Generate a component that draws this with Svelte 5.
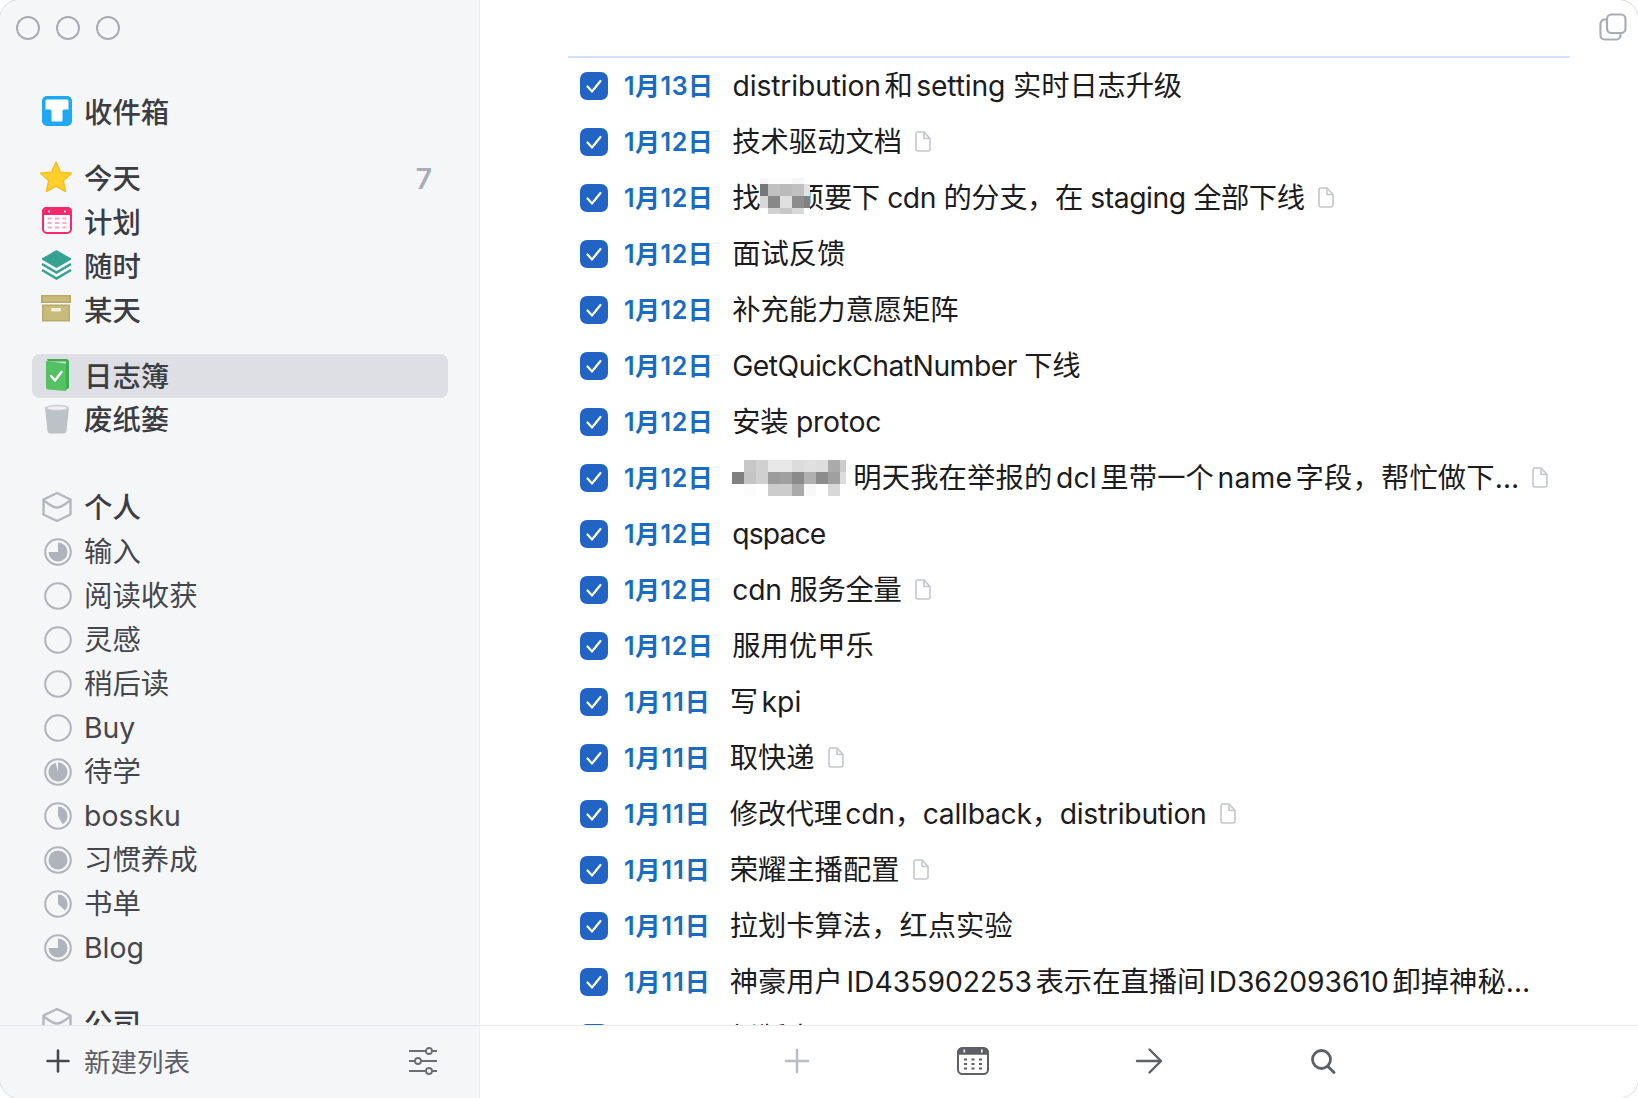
<script>
  const ring = '#afb3bb';

  const smart = [
    { name: '今天', icon: 'star', count: 7 },
    { name: '计划', icon: 'plan' },
    { name: '随时', icon: 'layers' },
    { name: '某天', icon: 'box' }
  ];

  const lists = [
    { name: '输入', pct: 75 },
    { name: '阅读收获', pct: 0 },
    { name: '灵感', pct: 0 },
    { name: '稍后读', pct: 0 },
    { name: 'Buy', pct: 0 },
    { name: '待学', pct: 96 },
    { name: 'bossku', pct: 42 },
    { name: '习惯养成', pct: 100 },
    { name: '书单', pct: 37 },
    { name: 'Blog', pct: 75 }
  ];

  // track: letter-spacing per row, the Latin runs are wider here than in the original font
  const entries = [
    { date: '1月13日', text: 'distribution和setting 实时日志升级', track: -0.15 },
    { date: '1月12日', text: '技术驱动文档', note: true },
    { date: '1月12日', text: '要下 cdn 的分支，在 staging 全部下线', note: true, blur: 'inline', track: -0.45 },
    { date: '1月12日', text: '面试反馈' },
    { date: '1月12日', text: '补充能力意愿矩阵' },
    { date: '1月12日', text: 'GetQuickChatNumber 下线', track: -0.5 },
    { date: '1月12日', text: '安装 protoc', track: -0.25 },
    { date: '1月12日', text: '明天我在举报的dcl里带一个name字段，帮忙做下…', note: true, blur: 'lead', track: 0.15 },
    { date: '1月12日', text: 'qspace', track: -0.9 },
    { date: '1月12日', text: 'cdn 服务全量', note: true, track: -0.25 },
    { date: '1月12日', text: '服用优甲乐' },
    { date: '1月11日', text: '写kpi' },
    { date: '1月11日', text: '取快递', note: true },
    { date: '1月11日', text: '修改代理cdn，callback，distribution', note: true, track: -0.28 },
    { date: '1月11日', text: '荣耀主播配置', note: true },
    { date: '1月11日', text: '拉划卡算法，红点实验' },
    { date: '1月11日', text: '神豪用户ID435902253表示在直播间ID362093610卸掉神秘…' },
    { date: '1月11日', text: '新版本', note: true }
  ];

  // redacted names in the screenshot, cell by cell
  const inlineMosaic = {
    cols: '8px 12px 12px 12px 6px',
    rows: '6px 12px 12px 6px',
    top: -4,
    cells: [
      '#f6f6f6', '#fdfdfd', '#fdfdfd', '#f7f7f7', '#fff',
      '#777', '#c0c0c0', '#bbb', '#c0c0c0', '#e2e2e2',
      '#d8d8d8', '#888', '#e0e0e0', '#8c8c8c', '#808080',
      '#fff', '#d2d2d2', '#c8c8c8', '#d8d8d8', '#fff'
    ]
  };
  const leadMosaic = {
    cols: 'repeat(9, 12px) 6px',
    rows: 'repeat(3, 12px)',
    top: -2,
    cells: [
      '#fff', '#c8c8c8', '#d0d0d0', '#e8e8e8', '#e8e8e8', '#dcdcdc', '#e0e0e0', '#dedede', '#aaa', '#ccc',
      '#808080', '#c4c4c4', '#d0d0d0', '#9c9c9c', '#a0a0a0', '#8a8a8a', '#b0b0b0', '#8c8c8c', '#a0a0a0', '#dcdcdc',
      '#fff', '#fcfcfc', '#fff', '#ccc', '#ccc', '#aaa', '#f8f8f8', '#fff', '#d8d8d8', '#fff'
    ]
  };

  function wedge(pct) {
    const r = 9.5;
    const a = (pct / 100) * Math.PI * 2;
    const x = 14 + r * Math.sin(a);
    const y = 14 - r * Math.cos(a);
    return `M14 14V${14 - r}A${r} ${r} 0 ${pct > 50 ? 1 : 0} 1 ${x.toFixed(2)} ${y.toFixed(2)}Z`;
  }
</script>

{#snippet mosaic(m)}
  <span class="mosaic" style="grid-template-columns:{m.cols};grid-template-rows:{m.rows};top:{m.top}px">
    {#each m.cells as c}
      <i style="background:{c}"></i>
    {/each}
  </span>
{/snippet}

{#snippet areaIcon()}
  <svg class="icon" width="32" height="32" viewBox="0 0 32 32" fill="none" stroke="#b3b7bf" stroke-width="2.4" stroke-linejoin="round">
    <path d="M16 2 29.500 8.500v15L16 30 2.500 23.500v-15Z" />
    <path d="M2.500 9.500C7 12 11 16.500 16 16.500s9-4.500 13.500-7" />
  </svg>
{/snippet}

<div class="window">
  <aside class="sidebar">
    <div class="lights">
      <span></span><span></span><span></span>
    </div>

    <nav class="nav">
      <div class="row strong">
        <svg class="icon" width="32" height="32" viewBox="0 0 32 32">
          <rect x="1" y="1" width="30" height="30" rx="5" fill="#1fa8f4" />
          <path fill="#fff" d="M6 4.500H26a1.500 1.500 0 0 1 1.500 1.500V14.500H23a1.500 1.500 0 0 0-1.500 1.500V25.500a1 1 0 0 1-1 1H11.500a1 1 0 0 1-1-1V16A1.500 1.500 0 0 0 9 14.500H4.500V6A1.500 1.500 0 0 1 6 4.500Z" />
        </svg>
        <span>收件箱</span>
      </div>

      <div class="group">
        {#each smart as item}
          <div class="row strong">
            {#if item.icon === 'star'}
              <svg class="icon star" width="34" height="34" viewBox="0 0 34 34">
                <path d="M17 2 21.500 12 32.500 13.200 24.300 20.600 26.600 31.500 17 26 7.400 31.500 9.700 20.600 1.500 13.200 12.500 12Z" fill="#ffd02b" stroke="#f7bf24" stroke-width="1.500" stroke-linejoin="round" />
              </svg>
            {:else if item.icon === 'plan'}
              <svg class="icon" width="32" height="32" viewBox="0 0 32 32">
                <rect x="2" y="3" width="28" height="25" rx="4" fill="#fff" stroke="#f5296b" stroke-width="2" />
                <path d="M2 9V6.500A3.500 3.500 0 0 1 5.500 3h21A3.500 3.500 0 0 1 30 6.500V9Z" fill="#f5296b" stroke="#f5296b" stroke-width="2" />
                <circle cx="8" cy="6.500" r="1" fill="#fff" />
                <circle cx="24" cy="6.500" r="1" fill="#fff" />
                <path d="M6.500 13.500h4M14 13.500h4M21.500 13.500h4M6.500 18h4M14 18h4M21.500 18h4M6.500 22.500h4M14 22.500h4M21.500 22.500h4" stroke="#fca7c4" stroke-width="2.200" />
              </svg>
            {:else if item.icon === 'layers'}
              <svg class="icon" width="32" height="32" viewBox="0 0 32 32">
                <path d="M15.500 2 29.500 10 15.500 18 1.500 10Z" fill="#36a291" stroke="#36a291" stroke-linejoin="round" stroke-width="1.500" />
                <path d="M1 15 15.500 23.500 30 15M1 21 15.500 29.500 30 21" fill="none" stroke="#36a291" stroke-width="2.600" />
              </svg>
            {:else}
              <svg class="icon" width="32" height="32" viewBox="0 0 32 32">
                <rect x="0" y="2" width="30" height="8" fill="#b8a96c" />
                <rect x="2" y="3.500" width="26" height="5" fill="#c9bb7b" />
                <rect x="1" y="11.500" width="28" height="17" fill="#b8a96c" />
                <rect x="2.500" y="13" width="25" height="14" fill="#c9bb7b" />
                <rect x="10" y="15" width="10" height="3.500" rx="1" fill="#f3efdc" />
              </svg>
            {/if}
            <span>{item.name}</span>
            {#if item.count}<b class="count">{item.count}</b>{/if}
          </div>
        {/each}
      </div>

      <div class="group">
        <div class="row strong selected">
          <svg class="icon book" width="32" height="34" viewBox="0 0 32 34">
            <path d="M5 1h19a3 3 0 0 1 3 3v26l-3 2V3.500H6Z" fill="#3fae50" />
            <path d="M4 3 24 5.500V33L6 31.500A2 2 0 0 1 4 29.500Z" fill="#54c263" />
            <path d="M9 18 13 22.500 19.500 14" fill="none" stroke="#fff" stroke-width="2.400" stroke-linecap="round" stroke-linejoin="round" />
          </svg>
          <span>日志簿</span>
        </div>
        <div class="row strong flush">
          <svg class="icon" width="32" height="32" viewBox="0 0 32 32">
            <path d="M4 4.500h24L25.500 28a3 3 0 0 1-3 2.500h-13a3 3 0 0 1-3-2.500Z" fill="#bcc2c8" />
            <ellipse cx="16" cy="4.800" rx="12" ry="3" fill="#c9ced3" />
            <ellipse cx="16" cy="5" rx="9.500" ry="1.700" fill="#eef0f2" />
          </svg>
          <span>废纸篓</span>
        </div>
      </div>

      <div class="group area">
        <div class="row strong flush">
          {@render areaIcon()}
          <span>个人</span>
        </div>
        {#each lists as list}
          <div class="row flush">
            <svg class="icon pie" width="28" height="28" viewBox="0 0 28 28">
              <circle cx="14" cy="14" r="12.800" fill="none" stroke={ring} stroke-width="2" />
              {#if list.pct >= 100}
                <circle cx="14" cy="14" r="9.500" fill={ring} />
              {:else if list.pct > 0}
                <path d={wedge(list.pct)} fill={ring} />
              {/if}
            </svg>
            <span>{list.name}</span>
          </div>
        {/each}
      </div>

      <div class="group second-area">
        <div class="row strong flush">
          {@render areaIcon()}
          <span>公司</span>
        </div>
      </div>
    </nav>

    <footer class="side-footer">
      <svg width="26" height="26" viewBox="0 0 26 26" stroke="#45484e" stroke-width="2.600" stroke-linecap="round">
        <path d="M13 2.500v21M2.500 13h21" />
      </svg>
      <span class="new-list">新建列表</span>
      <svg class="sliders" width="30" height="30" viewBox="0 0 30 30" fill="none" stroke="#6a6d73" stroke-width="1.800">
        <path d="M1 5h17M24 5h5M1 15h6M13 15h16M1 25h17M24 25h5" />
        <circle cx="21" cy="5" r="3" />
        <circle cx="10" cy="15" r="3" />
        <circle cx="21" cy="25" r="3" />
      </svg>
    </footer>
  </aside>

  <main class="content">
    <div class="topbar">
      <svg width="28" height="28" viewBox="0 0 28 28" fill="none" stroke="#a9adb3" stroke-width="2.200">
        <rect x="8" y="1.500" width="18.500" height="18.500" rx="4.500" />
        <path d="M8 6.500H5.500a4 4 0 0 0-4 4v12a4 4 0 0 0 4 4h12a4 4 0 0 0 4-4V20" />
      </svg>
    </div>

    <div class="list">
      {#each entries as entry}
        <div class="entry">
          <svg class="check" width="28" height="28" viewBox="0 0 28 28">
            <rect width="28" height="28" rx="7" fill="#2264c4" />
            <path d="M7.500 14.500 12 19.500 20.500 9" fill="none" stroke="#fff" stroke-width="2.200" stroke-linecap="round" stroke-linejoin="round" />
          </svg>
          <span class="date" class:ones={entry.date === '1月11日'}>{entry.date}</span>
          <span class="title" style="letter-spacing:{entry.track ?? 0}px">
            {#if entry.blur === 'inline'}
              找{@render mosaic(inlineMosaic)}<span class="tucked">须</span>{entry.text}
            {:else if entry.blur === 'lead'}
              {@render mosaic(leadMosaic)}<span class="after-lead">{entry.text}</span>
            {:else}
              {entry.text}
            {/if}
          </span>
          {#if entry.note}
            <svg class="note" width="16" height="21" viewBox="0 0 16 21" fill="none" stroke="#c3c6cb" stroke-width="1.600" stroke-linejoin="round">
              <path d="M3 1h6l6 6.500V18a2 2 0 0 1-2 2H3a2 2 0 0 1-2-2V3a2 2 0 0 1 2-2Z" />
              <path d="M9 1v6.500h6" />
            </svg>
          {/if}
        </div>
      {/each}
    </div>

    <footer class="toolbar">
      <svg width="26" height="26" viewBox="0 0 26 26" stroke="#b9bcc1" stroke-width="2.400" stroke-linecap="round">
        <path d="M13 2v22M2 13h22" />
      </svg>
      <svg width="32" height="28" viewBox="0 0 32 28">
        <rect x="1" y="1" width="30" height="26" rx="4.500" fill="#fff" stroke="#5d6066" stroke-width="2" />
        <path d="M1 7V5.500A4.500 4.500 0 0 1 5.500 1h21A4.500 4.500 0 0 1 31 5.500V7Z" fill="#5d6066" stroke="#5d6066" stroke-width="1.500" />
        <rect x="6.500" y="2.500" width="1.600" height="3" fill="#fff" />
        <rect x="24" y="2.500" width="1.600" height="3" fill="#fff" />
        <path d="M7 12.500h3M14.500 12.500h3M22 12.500h3M7 17h3M14.500 17h3M22 17h3M7 21.500h3M14.500 21.500h3M22 21.500h3" stroke="#5d6066" stroke-width="2.200" />
      </svg>
      <svg width="28" height="28" viewBox="0 0 28 28" fill="none" stroke="#5d6066" stroke-width="2.400" stroke-linecap="round" stroke-linejoin="round">
        <path d="M2 14h23M14.500 2.500 26 14 14.500 25.500" />
      </svg>
      <svg class="search" width="26" height="26" viewBox="0 0 26 26" fill="none" stroke="#5d6066" stroke-width="2.800" stroke-linecap="round">
        <circle cx="11.500" cy="11.500" r="9" />
        <path d="M18 18.500 24 24.500" />
      </svg>
    </footer>
  </main>
</div>

<style>
  :global(body) {
    margin: 0;
    background: #fff;
  }

  .window {
    display: flex;
    height: 1098px;
    overflow: hidden;
    border-radius: 20px;
    box-shadow: 0 0 0 1px #d8d9db;
    font-family: Inter, "Noto Sans CJK SC", sans-serif;
    text-autospace: normal;
  }

  .sidebar {
    display: flex;
    flex-direction: column;
    flex: none;
    width: 479px;
    background: #f5f6f8;
    border-right: 1px solid #eceef0;
  }

  .lights {
    display: flex;
    flex: none;
    gap: 16px;
    padding: 16px;
  }

  .lights span {
    width: 24px;
    height: 24px;
    box-sizing: border-box;
    border: 2px solid #a8acb3;
    border-radius: 50%;
  }

  .nav {
    flex: 1;
    min-height: 0;
    overflow: hidden;
    padding: 34px 31px 0 32px;
  }

  .group {
    margin-top: 22px;
  }

  .area {
    margin-top: 44px;
  }

  .second-area {
    margin-top: 32px;
  }

  .row {
    position: relative;
    display: flex;
    align-items: center;
    box-sizing: border-box;
    height: 44px;
    padding: 2px 0 0 52px;
    border-radius: 8px;
    font-size: 28.4px;
    line-height: 34px;
    color: #45474d;
  }

  .row.flush {
    padding-top: 0;
  }

  .row.strong {
    font-weight: 500;
    color: #3b3d43;
  }

  .row.selected {
    background: #dddfe4;
  }

  .row .icon {
    position: absolute;
    left: 9px;
    top: 5px;
  }

  .row .icon.star {
    left: 7px;
    top: 4px;
  }

  .row .icon.book {
    left: 10px;
    top: 4px;
  }

  .row .icon.pie {
    left: 12px;
    top: 8px;
  }

  .count {
    margin: 0 16px 0 auto;
    font-weight: 600;
    color: #a9adb5;
  }

  .side-footer {
    display: flex;
    flex: none;
    align-items: center;
    box-sizing: border-box;
    height: 73px;
    padding: 0 41px 3px 45px;
    border-top: 1px solid #e4e5e8;
    color: #5c5f66;
    font-size: 26.5px;
  }

  .new-list {
    margin-left: 13px;
  }

  .sliders {
    margin-left: auto;
  }

  .content {
    display: flex;
    flex-direction: column;
    flex: 1;
    min-width: 0;
    background: #fff;
  }

  .topbar {
    display: flex;
    flex: none;
    justify-content: flex-end;
    box-sizing: border-box;
    height: 56px;
    padding: 13px 11px 0 0;
  }

  .list {
    flex: 1;
    min-height: 0;
    overflow: hidden;
    margin: 0 68px 0 88px;
    border-top: 2px solid #cfe2fa;
  }

  .entry {
    display: flex;
    align-items: center;
    height: 56px;
    padding-left: 12px;
    font-size: 28.3px;
    color: #1c1c1e;
    white-space: nowrap;
  }

  .check {
    flex: none;
  }

  .date {
    flex: none;
    margin: 0 0 4px 16px;
    font-size: 25px;
    font-weight: 600;
    letter-spacing: 0.5px;
    color: #1a6bc4;
    text-autospace: no-autospace;
  }

  .date.ones {
    letter-spacing: 1px;
  }

  .title {
    margin-left: 19px;
    line-height: 34px;
  }

  .mosaic {
    display: inline-grid;
    position: relative;
    z-index: 1;
    margin-block: -4px;
    vertical-align: middle;
  }

  .tucked {
    margin-left: -14px;
  }

  .after-lead {
    margin-left: 7px;
  }

  .note {
    flex: none;
    margin: 0 0 2px 13px;
  }

  .toolbar {
    display: grid;
    flex: none;
    grid-template-columns: repeat(4, 176px);
    justify-content: center;
    justify-items: center;
    align-items: center;
    box-sizing: border-box;
    height: 73px;
    padding: 0 0 3px 4px;
    border-top: 1px solid #ebebed;
    background: #fff;
  }

  .search {
    margin-right: 4px;
  }
</style>
